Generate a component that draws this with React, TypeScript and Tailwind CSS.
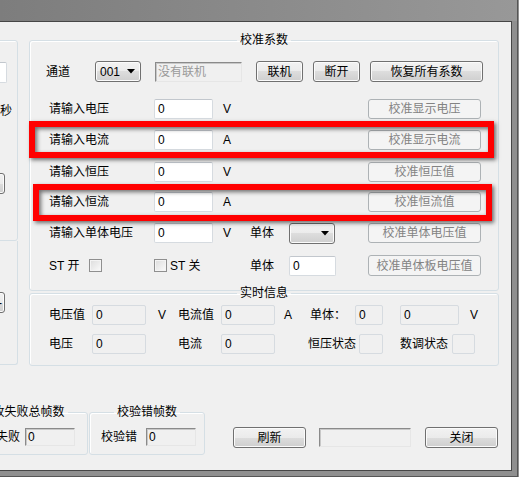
import React from 'react';

const btnFace =
  'h-[21px] shrink-0 rounded-[3px] border border-[#707070] bg-[linear-gradient(to_bottom,#f2f2f2_0%,#ebebeb_50%,#dddddd_50%,#cfcfcf_100%)] shadow-[inset_0_0_0_1px_#fbfbfb] flex items-center text-black';
const btn = `${btnFace} justify-center`;
const btnOff =
  'h-[20px] w-[113px] shrink-0 rounded-[3px] border border-[#adb2b5] bg-[#f4f4f4] flex items-center justify-center text-[#838383]';
const input = 'h-[20px] shrink-0 rounded-[2px] border border-[#d6dbe0] border-t-[#c2c7cd] bg-white pl-[3px] flex items-center';
const roBox = 'h-[20px] shrink-0 rounded-[2px] border border-[#d6dbe0] bg-[#f0f0f0] pl-[3px] flex items-center';
const sunken =
  'shrink-0 border border-t-[#8a8a8a] border-l-[#8a8a8a] border-b-[#e6e6e6] border-r-[#e6e6e6] shadow-[inset_1px_1px_0_#c8c8c8] bg-[#f0f0f0] pl-[2px] flex items-center';
const group = 'border border-[#d5dfe5] rounded-[3px] shadow-[inset_1px_1px_0_#ffffff]';
const legend = 'mx-auto px-[3px] leading-[14px]';

function Arrow() {
  return (
    <svg width="8" height="5" viewBox="0 0 8 5" className="shrink-0">
      <path d="M0 0h8L4 4.5z" fill="#000" />
    </svg>
  );
}

function Combo({ value, w }: { value?: string; w: string }) {
  return (
    <div className={`${btnFace} ${w} justify-between pl-[4px] pr-[5px]`}>
      <span>{value}</span>
      <Arrow />
    </div>
  );
}

function Check() {
  return (
    <div className="w-[13px] h-[13px] shrink-0 border border-[#8f8f8f] bg-[linear-gradient(135deg,#dcdcdc,#fbfbfb)] shadow-[inset_0_0_0_1px_#f4f4f4]" />
  );
}

function InputRow({ label, unit, btnText }: { label: string; unit: string; btnText: string }) {
  return (
    <div className="flex items-center h-[20px] pl-[19px]">
      <span className="w-[105px] shrink-0">{label}</span>
      <div className={`${input} w-[59px]`}>0</div>
      <span className="w-[155px] shrink-0 pl-[10px]">{unit}</span>
      <div className={btnOff}>{btnText}</div>
    </div>
  );
}

export default function App() {
  return (
    <div className="w-[519px] h-[477px] bg-[#8f8f8f] relative overflow-hidden text-[12px] leading-[14px] text-black font-['Liberation_Sans','Noto_Sans_CJK_SC',sans-serif]">
      <div className="w-[518px] h-[477px] border-r border-b border-[#555555] flex flex-col">
        {/* title strip */}
        <div className="h-[21px] shrink-0 bg-gradient-to-r from-[#7d7d7d] to-[#989898]" />

        {/* client area */}
        <div className="w-[512px] h-[450px] shrink-0 border-t border-r border-b border-[#464646] bg-[#f0f0f0] overflow-hidden">
          <div className="flex mt-[11px]">
            {/* left cut-off panel */}
            <div className="w-[18px] shrink-0 overflow-hidden pt-[7px]">
              <div className={`${group} -ml-[60px] w-[78px] h-[201px] flex flex-col items-end`}>
                <div className={`${input} w-[40px] h-[21px] mt-[21px] mr-[10px]`} />
                <span className="mt-[21px] mr-[5px]">秒</span>
                <div className={`${btn} w-[50px] h-[20px] mt-[55px] mr-[12px]`} />
              </div>
              <div className="-ml-[60px] w-[78px] h-[124px] border border-t-0 border-[#d5dfe5] rounded-b-[3px] flex flex-col items-end">
                <div className={`${btnFace} w-[50px] mt-[51px] mr-[12px] justify-end pr-[2px]`}>-</div>
              </div>
            </div>

            {/* main column */}
            <div className="ml-[11px] w-[470px] shrink-0">
              <fieldset className={`${group} pb-[14px]`}>
                <legend className={legend}>校准系数</legend>
                <div className="flex items-center h-[21px] mt-[14px] pl-[16px]">
                  <span className="w-[49px] shrink-0">通道</span>
                  <Combo value="001" w="w-[46px]" />
                  <div className={`${sunken} w-[87px] h-[20px] ml-[14px] text-[#9a9a9a]`}>没有联机</div>
                  <div className={`${btn} w-[47px] ml-[14px]`}>联机</div>
                  <div className={`${btn} w-[47px] ml-[10px]`}>断开</div>
                  <div className={`${btn} w-[113px] ml-[10px]`}>恢复所有系数</div>
                </div>
                <div className="mt-[17px]">
                  <InputRow label="请输入电压" unit="V" btnText="校准显示电压" />
                </div>
                <div className="mt-[11px]">
                  <InputRow label="请输入电流" unit="A" btnText="校准显示电流" />
                </div>
                <div className="mt-[12px]">
                  <InputRow label="请输入恒压" unit="V" btnText="校准恒压值" />
                </div>
                <div className="mt-[10px]">
                  <InputRow label="请输入恒流" unit="A" btnText="校准恒流值" />
                </div>
                <div className="flex items-center h-[20px] mt-[11px] pl-[19px]">
                  <span className="w-[105px] shrink-0">请输入单体电压</span>
                  <div className={`${input} w-[59px]`}>0</div>
                  <span className="w-[37px] shrink-0 pl-[10px]">V</span>
                  <span className="w-[39px] shrink-0">单体</span>
                  <Combo w="w-[46px]" />
                  <div className="w-[33px] shrink-0" />
                  <div className={btnOff}>校准单体电压值</div>
                </div>
                <div className="flex items-center h-[21px] mt-[12px] pl-[19px]">
                  <span className="w-[40px] shrink-0">ST 开</span>
                  <Check />
                  <div className="ml-[52px]">
                    <Check />
                  </div>
                  <span className="w-[83px] shrink-0 pl-[3px]">ST 关</span>
                  <span className="w-[39px] shrink-0">单体</span>
                  <div className={`${input} w-[47px]`}>0</div>
                  <div className="w-[32px] shrink-0" />
                  <div className={`${btnOff} h-[21px]`}>校准单体板电压值</div>
                </div>
              </fieldset>

              <fieldset className={`${group} -mt-[5px] pb-[11px]`}>
                <legend className={legend}>实时信息</legend>
                <div className="flex items-center h-[20px] mt-[5px] pl-[19px]">
                  <span className="w-[43px] shrink-0">电压值</span>
                  <div className={`${roBox} w-[54px]`}>0</div>
                  <span className="w-[32px] shrink-0 pl-[12px]">V</span>
                  <span className="w-[43px] shrink-0">电流值</span>
                  <div className={`${roBox} w-[54px]`}>0</div>
                  <span className="w-[35px] shrink-0 pl-[9px]">A</span>
                  <span className="w-[45px] shrink-0">单体：</span>
                  <div className={`${roBox} w-[28px]`}>0</div>
                  <div className={`${roBox} w-[59px] ml-[17px]`}>0</div>
                  <span className="pl-[11px]">V</span>
                </div>
                <div className="flex items-center h-[20px] mt-[9px] pl-[19px]">
                  <span className="w-[43px] shrink-0">电压</span>
                  <div className={`${roBox} w-[54px]`}>0</div>
                  <span className="w-[32px] shrink-0" />
                  <span className="w-[43px] shrink-0">电流</span>
                  <div className={`${roBox} w-[54px]`}>0</div>
                  <span className="w-[84px] shrink-0 pl-[33px]">恒压状态</span>
                  <div className={`${roBox} w-[24px]`} />
                  <span className="w-[69px] shrink-0 pl-[17px]">数调状态</span>
                  <div className={`${roBox} w-[23px]`} />
                </div>
              </fieldset>
            </div>
          </div>

          {/* bottom row */}
          <div className="flex items-start mt-[39px] -ml-[43px]">
            <fieldset className={`${group} w-[131px] shrink-0 pb-[8px]`}>
              <legend className={legend}>接收失败总帧数</legend>
              <div className="flex items-center h-[18px] mt-[9px] pl-[14px]">
                <span className="w-[53px] shrink-0">接收失败</span>
                <div className={`${sunken} w-[50px] h-[18px]`}>0</div>
              </div>
            </fieldset>
            <fieldset className={`${group} w-[116px] shrink-0 ml-[1px] pb-[8px]`}>
              <legend className={legend}>校验错帧数</legend>
              <div className="flex items-center h-[18px] mt-[9px] pl-[11px]">
                <span className="w-[45px] shrink-0">校验错</span>
                <div className={`${sunken} w-[50px] h-[18px]`}>0</div>
              </div>
            </fieldset>
            <div className={`${btn} w-[73px] ml-[28px] mt-[22px]`}>刷新</div>
            <div className={`${sunken} w-[92px] h-[19px] ml-[13px] mt-[23px]`} />
            <div className={`${btn} w-[73px] ml-[14px] mt-[22px]`}>关闭</div>
          </div>
        </div>
      </div>

      {/* red highlight frames drawn over the dialog */}
      <div className="absolute left-[29px] top-[121px] w-[465px] h-[37px] border-[6px] border-[#ff0000] shadow-[2px_2px_4px_rgba(0,0,0,0.55),inset_2px_2px_4px_rgba(0,0,0,0.55)]" />
      <div className="absolute left-[33px] top-[184px] w-[459px] h-[37px] border-[6px] border-[#ff0000] shadow-[2px_2px_4px_rgba(0,0,0,0.55),inset_2px_2px_4px_rgba(0,0,0,0.55)]" />
    </div>
  );
}
